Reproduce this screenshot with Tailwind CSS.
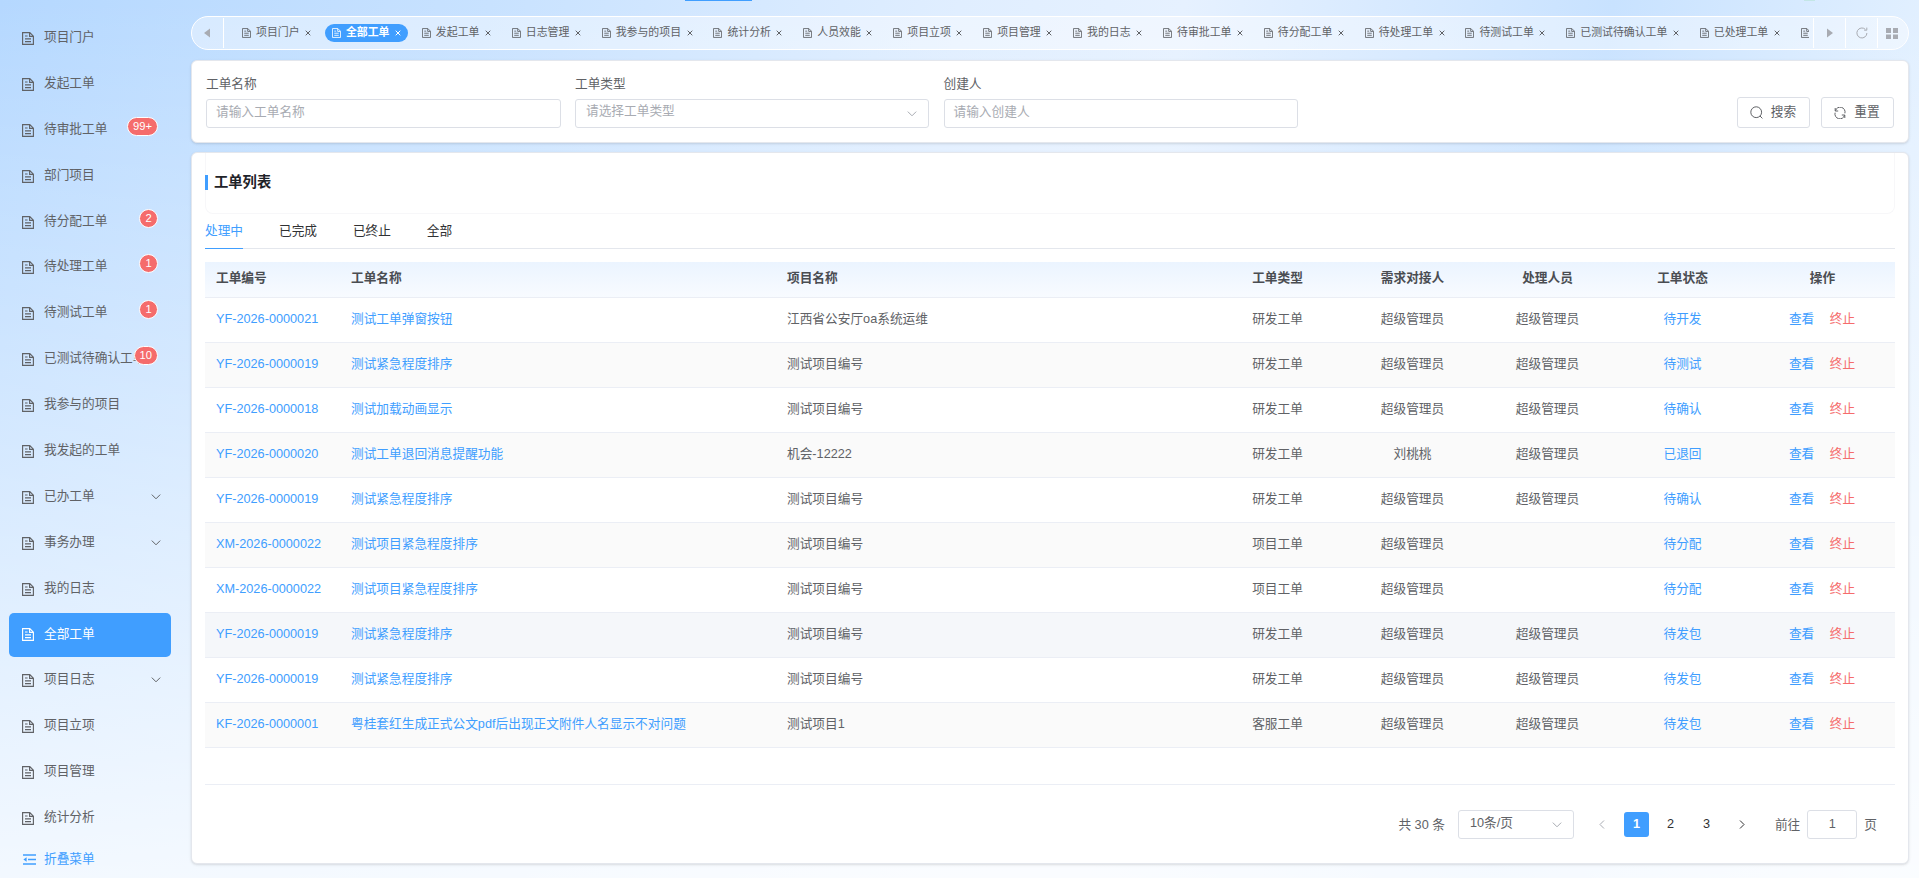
<!DOCTYPE html>
<html lang="zh-CN">
<head>
    <meta charset="UTF-8">
    <meta name="viewport" content="width=device-width, initial-scale=1.0">
    <title>全部工单</title>
    <script src="https://cdn.jsdelivr.net/npm/@tailwindcss/browser@4"></script>
</head>
<body class="h-screen overflow-hidden font-['Liberation_Sans','Noto_Sans_CJK_SC',sans-serif] text-[12.7px] leading-[18px] text-[#606266] bg-[linear-gradient(to_bottom,rgba(255,255,255,0),rgba(255,255,255,0.82)),linear-gradient(98deg,#b5d8ff_0%,#c8e2ff_24%,#e0eeff_47%,#e6f1ff_58%,#c8e2ff_79%,#e6f2ff_97%)]">

    <!-- 图标 -->
    <svg class="hidden">
        <symbol id="i-doc" viewBox="0 0 12 13"><path d="M7.8.6H.6v11.8h10.8V4.2zM7.6.8v3.6h3.6M3 4h2.6M3 6.8h6M3 9.6h6" fill="none" stroke="currentColor" stroke-width="1.15"/></symbol>
        <symbol id="i-close" viewBox="0 0 6 6"><path d="M.7.7l4.6 4.6M5.3.7L.7 5.3" fill="none" stroke="currentColor" stroke-width="1"/></symbol>
        <symbol id="i-down" viewBox="0 0 10 6"><path d="M.8.6L5 4.8 9.2.6" fill="none" stroke="currentColor" stroke-width="1"/></symbol>
    </svg>

    <!-- 顶部导航残留 -->
    <div class="absolute left-[685px] top-0 h-px w-[67px] bg-[#409eff]"></div>
    <div class="absolute left-[1804px] top-0 h-px w-[11px] bg-[#c3e6e6]"></div>

    <div class="flex h-full">
        <!-- 侧边栏 -->
        <aside class="flex w-[191px] shrink-0 flex-col pl-[9px] pt-[15px]">
            <ul id="menu" class="w-[162px]"></ul>
            <div class="mt-[-1px] flex h-[44px] items-center pl-[14px] text-[#409eff]">
                <svg class="h-[11px] w-[13px]" viewBox="0 0 13 11"><path d="M0 1h13M5 5.5h8M0 10h13" stroke="currentColor" stroke-width="1.6"/><path d="M3.6 3.2v4.6L.4 5.5z" fill="currentColor"/></svg>
                <span class="ml-[8px]">折叠菜单</span>
            </div>
        </aside>

        <main class="flex w-[1718px] shrink-0 flex-col pt-[16px]">
            <!-- 标签栏 -->
            <div class="flex h-[34px] shrink-0 items-center rounded-full border border-white bg-white/40 text-[10.9px] text-[#a8abb2]">
                <div class="flex h-[30px] w-[32px] items-center justify-center border-r border-white pr-[2px]"><svg class="h-[10px] w-[6px]" viewBox="0 0 6 10"><path d="M6 .5v9L0 5z" fill="currentColor"/></svg></div>
                <div id="tags" class="flex h-full w-[1585px] items-center gap-[6.85px] overflow-hidden pl-[11px] pb-[1px] text-[#606266]"></div>
                <div class="ml-[4px] flex h-[30px] w-[32px] items-center justify-center border-l border-white"><svg class="h-[10px] w-[6px]" viewBox="0 0 6 10"><path d="M0 .5v9L6 5z" fill="currentColor"/></svg></div>
                <div class="flex h-[30px] w-[32px] items-center justify-center border-l border-white"><svg class="h-[12px] w-[12px]" viewBox="0 0 12 12"><path d="M10.9 6A5 5 0 1 1 9.3 2.3M10.8.6v2.6H8.2" fill="none" stroke="currentColor"/></svg></div>
                <div class="flex h-[30px] flex-1 items-center border-l border-white pl-[8px]"><svg class="h-[11px] w-[12px]" viewBox="0 0 12 11"><path d="M0 0h5v5H0zM7 0h5v5H7zM0 6.5h5V11H0zM7 6.5h5V11H7z" fill="currentColor"/></svg></div>
            </div>

            <!-- 搜索 -->
            <form class="mt-[10px] flex h-[83px] shrink-0 rounded-md border border-[#e4e7ed] bg-white pl-[14px] pr-[14px] shadow-sm">
                <div class="flex gap-[14.5px] pt-[14px]">
                    <div class="w-[354.5px]">
                        <label class="block">工单名称</label>
                        <div class="mt-[6px] h-[29px] rounded-[3px] border border-[#dcdfe6] pl-[9px] pt-[3px] text-[#a8abb2]">请输入工单名称</div>
                    </div>
                    <div class="w-[354px]">
                        <label class="block">工单类型</label>
                        <div class="mt-[6px] flex h-[29px] justify-between rounded-[3px] border border-[#dcdfe6] pl-[10px] pr-[11px] pt-[2px] text-[#a8abb2]">请选择工单类型<svg class="mt-[9px] h-[6px] w-[10px]"><use href="#i-down"/></svg></div>
                    </div>
                    <div class="w-[354px]">
                        <label class="block">创建人</label>
                        <div class="mt-[6px] h-[29px] rounded-[3px] border border-[#dcdfe6] pl-[9px] pt-[3px] text-[#a8abb2]">请输入创建人</div>
                    </div>
                </div>
                <div class="ml-auto flex gap-[11px] pt-[36px]">
                    <button type="button" class="flex h-[31px] w-[73px] items-center justify-center gap-[8px] rounded-[3px] border border-[#dcdfe6] pr-[1px] pb-[2px]">
                        <svg class="mt-[2px] h-[13px] w-[13px]" viewBox="0 0 13 13"><circle cx="6.2" cy="6.2" r="5.4" fill="none" stroke="currentColor"/><path d="M10 10l2.4 2.4" stroke="currentColor"/></svg>
                        搜索
                    </button>
                    <button type="button" class="flex h-[31px] w-[73px] items-center justify-center gap-[8px] rounded-[3px] border border-[#dcdfe6] pr-[1px] pb-[2px]">
                        <svg class="mt-[2px] h-[12px] w-[12px]" viewBox="0 0 12 12"><path d="M1.2 1v3h3M1.4 3.8A4.9 4.9 0 0 1 10.9 6.3M10.8 11V8h-3M10.6 8.2A4.9 4.9 0 0 1 1.1 5.7" fill="none" stroke="currentColor"/></svg>
                        重置
                    </button>
                </div>
            </form>

            <!-- 列表 -->
            <section class="mt-[9px] h-[712px] shrink-0 rounded-md border border-[#e4e7ed] bg-white px-[13px] shadow-sm">
                <div class="flex h-[61px] items-center rounded-b-lg border-x border-b border-[#f7f7f9] pb-[1px]">
                    <i class="-ml-px h-[15px] w-[3px] bg-[#409eff]"></i>
                    <h2 class="-mt-[2px] ml-[6px] text-[14.3px] font-bold text-[#1f2329]">工单列表</h2>
                </div>
                <div class="flex h-[35px] gap-[35.9px] border-b border-[#e4e7ed] text-[#303133]">
                    <span class="h-[35px] border-b border-[#409eff] pt-[8px] text-[#409eff]">处理中</span>
                    <span class="pt-[8px]">已完成</span>
                    <span class="pt-[8px]">已终止</span>
                    <span class="pt-[8px]">全部</span>
                </div>
                <div class="mt-[13px] h-[523px] border-b border-[#ebeef5]">
                    <div class="grid h-[36px] grid-cols-[135px_436px_434px_135px_135px_135px_135px_145px] items-center border-b border-[#ebeef5] bg-linear-to-b from-[#ebf4ff] to-[#f8fbff] pb-[4px] font-bold text-[#4a4d52]">
                        <span class="pl-[11px]">工单编号</span>
                        <span class="pl-[11px]">工单名称</span>
                        <span class="pl-[11px]">项目名称</span>
                        <span class="text-center">工单类型</span>
                        <span class="text-center">需求对接人</span>
                        <span class="text-center">处理人员</span>
                        <span class="text-center">工单状态</span>
                        <span class="text-center">操作</span>
                    </div>
                    <div id="rows"></div>
                </div>
                <!-- 分页 -->
                <div class="mt-[25px] flex h-[29px] items-center justify-end pr-[18px]">
                    <span>共 30 条</span>
                    <div class="ml-[13px] flex h-[29px] w-[116px] items-center justify-between rounded-[3px] border border-[#dcdfe6] pl-[11px] pr-[11px]"><span class="-mt-[4px]">10条/页</span><svg class="h-[6px] w-[10px] text-[#a8abb2]"><use href="#i-down"/></svg></div>
                    <svg class="ml-[25px] h-[9px] w-[6px] text-[#a8abb2]" viewBox="0 0 6 9"><path d="M5 .5l-4 4 4 4" fill="none" stroke="currentColor"/></svg>
                    <span class="ml-[19px] flex h-[25px] w-[25px] items-center justify-center rounded-[3px] bg-[#409eff] pb-[1px] font-bold text-white">1</span>
                    <span class="ml-[9px] w-[25px] pb-[1px] text-center text-[#303133]">2</span>
                    <span class="ml-[11px] w-[25px] pb-[1px] text-center text-[#303133]">3</span>
                    <svg class="ml-[20px] h-[9px] w-[6px] text-[#303133]" viewBox="0 0 6 9"><path d="M1 .5l4 4-4 4" fill="none" stroke="currentColor"/></svg>
                    <span class="ml-[30px]">前往</span>
                    <span class="ml-[7px] flex h-[29px] w-[50px] items-center justify-center rounded-[3px] border border-[#dcdfe6] pb-[2px]">1</span>
                    <span class="ml-[7px]">页</span>
                </div>
            </section>
        </main>
    </div>

    <script>
        // 菜单：名称、角标、是否有子菜单
        const menu = [
            ['项目门户'], ['发起工单'], ['待审批工单', '99+'], ['部门项目'], ['待分配工单', '2'],
            ['待处理工单', '1'], ['待测试工单', '1'], ['已测试待确认工单', '10'], ['我参与的项目'],
            ['我发起的工单'], ['已办工单', '', true], ['事务办理', '', true], ['我的日志'], ['全部工单'],
            ['项目日志', '', true], ['项目立项'], ['项目管理'], ['统计分析']
        ];
        document.getElementById('menu').innerHTML = menu.map(([name, badge, sub]) => {
            const active = name === '全部工单';
            return `<li class="h-[45.9px] pt-px">
                <a class="relative flex h-[44px] items-center rounded-[5px] pl-[13px] pr-[10px] ${active ? 'bg-[#409eff] text-white' : ''}">
                    <svg class="h-[13px] w-[12px] shrink-0 ${active ? '' : 'mt-[1px]'}"><use href="#i-doc"/></svg>
                    <span class="ml-[10px] w-[102px] truncate ${active ? '-mt-px' : '-mt-[2px]'}">${name}</span>
                    ${badge ? `<b class="absolute right-[13px] top-[9px] h-[19px] min-w-[19px] rounded-full border border-white bg-[#f56c6c] px-[5px] text-center text-[11.2px] leading-[17px] font-normal text-white">${badge}</b>` : ''}
                    ${sub ? '<svg class="ml-auto h-[6px] w-[10px] shrink-0"><use href="#i-down"/></svg>' : ''}
                </a>
            </li>`;
        }).join('');

        const tags = ['项目门户', '全部工单', '发起工单', '日志管理', '我参与的项目', '统计分析', '人员效能', '项目立项', '项目管理',
            '我的日志', '待审批工单', '待分配工单', '待处理工单', '待测试工单', '已测试待确认工单', '已处理工单', '已办工单'];
        document.getElementById('tags').innerHTML = tags.map(name => `
            <span class="flex h-[18px] shrink-0 items-center rounded-full px-[7px] ${name === '全部工单' ? 'bg-[#409eff] font-bold text-white' : ''}">
                <svg class="h-[10px] w-[9px]"><use href="#i-doc"/></svg>
                <span class="ml-[5px] -mt-[2px]">${name}</span>
                <svg class="ml-[5.5px] h-[6px] w-[6px]"><use href="#i-close"/></svg>
            </span>`).join('');

        const rows = [
            ['YF-2026-0000021', '测试工单弹窗按钮', '江西省公安厅oa系统运维', '研发工单', '超级管理员', '超级管理员', '待开发'],
            ['YF-2026-0000019', '测试紧急程度排序', '测试项目编号', '研发工单', '超级管理员', '超级管理员', '待测试'],
            ['YF-2026-0000018', '测试加载动画显示', '测试项目编号', '研发工单', '超级管理员', '超级管理员', '待确认'],
            ['YF-2026-0000020', '测试工单退回消息提醒功能', '机会-12222', '研发工单', '刘桃桃', '超级管理员', '已退回'],
            ['YF-2026-0000019', '测试紧急程度排序', '测试项目编号', '研发工单', '超级管理员', '超级管理员', '待确认'],
            ['XM-2026-0000022', '测试项目紧急程度排序', '测试项目编号', '项目工单', '超级管理员', '', '待分配'],
            ['XM-2026-0000022', '测试项目紧急程度排序', '测试项目编号', '项目工单', '超级管理员', '', '待分配'],
            ['YF-2026-0000019', '测试紧急程度排序', '测试项目编号', '研发工单', '超级管理员', '超级管理员', '待发包'],
            ['YF-2026-0000019', '测试紧急程度排序', '测试项目编号', '研发工单', '超级管理员', '超级管理员', '待发包'],
            ['KF-2026-0000001', '粤桂套红生成正式公文pdf后出现正文附件人名显示不对问题', '测试项目1', '客服工单', '超级管理员', '超级管理员', '待发包']
        ];
        document.getElementById('rows').innerHTML = rows.map((r, i) => `
            <div class="grid h-[45px] grid-cols-[135px_436px_434px_135px_135px_135px_135px_145px] items-center border-b border-[#ebeef5] pb-[3px] ${i === 7 ? 'bg-[#f5f7fa]' : i % 2 ? 'bg-[#fafafa]' : ''}">
                <span class="pl-[11px] text-[#409eff]">${r[0]}</span>
                <span class="pl-[11px] text-[#409eff]">${r[1]}</span>
                <span class="pl-[11px]">${r[2]}</span>
                <span class="text-center">${r[3]}</span>
                <span class="text-center">${r[4]}</span>
                <span class="text-center">${r[5]}</span>
                <span class="text-center text-[#409eff]">${r[6]}</span>
                <span class="flex justify-center gap-[15.5px] pr-[1px] text-[#409eff]"><a>查看</a><a class="text-[#f56c6c]">终止</a></span>
            </div>`).join('');
    </script>
</body>
</html>
